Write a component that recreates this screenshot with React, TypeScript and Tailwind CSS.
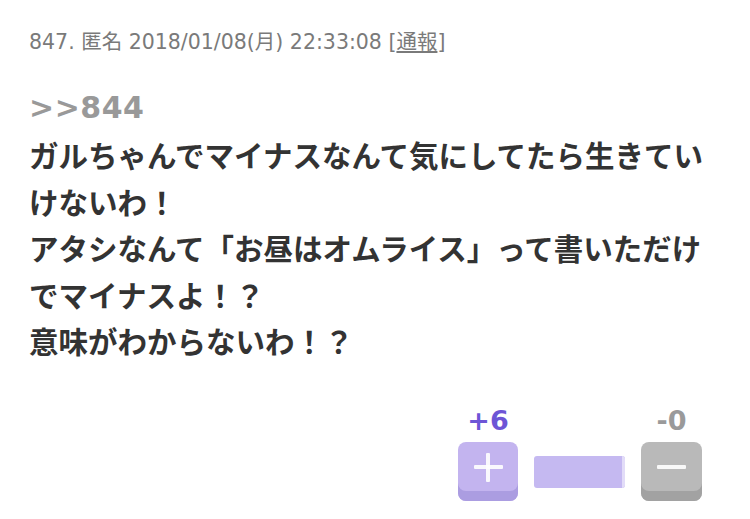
import React from "react";

const lines = [
  "ガルちゃんでマイナスなんて気にしてたら生きてい",
  "けないわ！",
  "アタシなんて「お昼はオムライス」って書いただけ",
  "でマイナスよ！？",
  "意味がわからないわ！？",
];

const VoteButton = ({ kind }: { kind: "plus" | "minus" }) => {
  const plus = kind === "plus";
  return (
    <div
      className={
        plus
          ? "relative w-[60px] h-[59px] rounded-[8px] bg-[#c3b4ef] shadow-[inset_0_-10px_0_#ab9de1]"
          : "relative w-[61px] h-[59px] rounded-[8px] bg-[#b9b9b9] shadow-[inset_0_-10px_0_#a2a2a2]"
      }
    >
      {/* icon sits in the upper (lighter) part of the button */}
      <div className="absolute inset-x-0 top-0 h-[52px] flex items-center justify-center">
        <div className="relative w-[29px] h-[29px]">
          <span className="absolute left-0 right-0 top-[12px] h-[4px] rounded-[1px] bg-white/90" />
          {plus && (
            <span className="absolute top-0 bottom-0 left-[12px] w-[4px] rounded-[1px] bg-white/90" />
          )}
        </div>
      </div>
    </div>
  );
};

export default function App() {
  return (
    <div className="w-[750px] h-[519px] bg-white overflow-hidden">
      {/* meta line */}
      <div className="pl-[29px] pt-[28px] text-[20.5px] leading-[28px] text-[#7a7a7a] font-['DejaVu_Sans','Noto_Sans_CJK_JP',sans-serif] whitespace-nowrap">
        847. 匿名 2018/01/08(月) 22:33:08 [<span className="underline underline-offset-2">通報</span>]
      </div>

      {/* comment body */}
      <div className="px-[29px] mt-[29px]">
        <p className="text-[30px] leading-[46px] tracking-[0.5px] font-bold text-[#999999] font-['DejaVu_Sans',sans-serif]">
          &gt;&gt;844
        </p>
        <div className="text-[29.5px] leading-[46.5px] font-bold text-[#333333] font-['Noto_Sans_CJK_JP',sans-serif]">
          {lines.map((l) => (
            <div key={l}>{l}</div>
          ))}
        </div>
      </div>

      {/* votes */}
      <div className="mt-[43px] pr-[48px] flex justify-end items-end">
        <div className="flex flex-col items-center gap-[7px]">
          <span className="text-[27px] leading-[28px] font-bold text-[#6d55d6] font-['DejaVu_Sans',sans-serif]">
            +6
          </span>
          <VoteButton kind="plus" />
        </div>
        <div className="mx-[16px] mb-[13px] w-[91px] h-[32px] rounded-[3px] bg-[#c5b9f1] flex justify-end">
          <div className="w-[3px] h-full bg-[#e2dcf8] rounded-r-[3px]" />
        </div>
        <div className="flex flex-col items-center gap-[7px]">
          <span className="text-[27px] leading-[28px] font-bold text-[#9a9a9a] font-['DejaVu_Sans',sans-serif]">
            -0
          </span>
          <VoteButton kind="minus" />
        </div>
      </div>
    </div>
  );
}
